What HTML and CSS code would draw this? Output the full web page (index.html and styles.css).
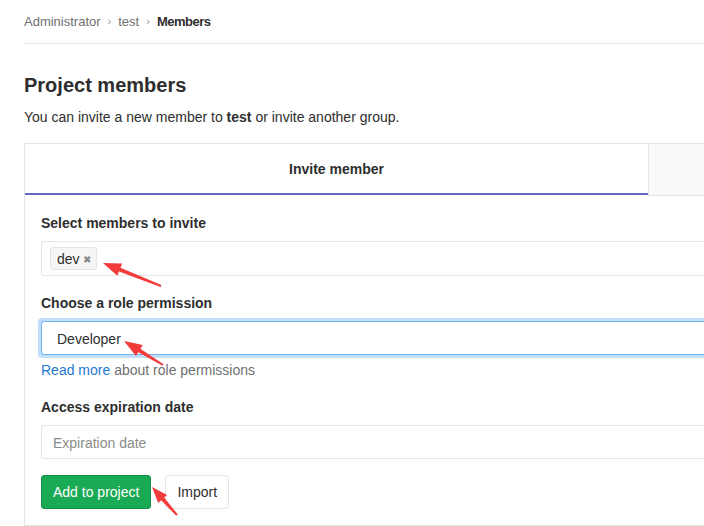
FILE: index.html
```html
<!DOCTYPE html>
<html>
<head>
<meta charset="utf-8">
<link rel="stylesheet" href="styles.css">
</head>
<body>
<div class="page">
  <nav class="breadcrumb">
    <span class="crumb">Administrator</span>
    <span class="sep">›</span>
    <span class="crumb">test</span>
    <span class="sep">›</span>
    <span class="crumb current">Members</span>
  </nav>
  <h3 class="title">Project members</h3>
  <p class="lead">You can invite a new member to <strong>test</strong> or invite another group.</p>
  <div class="card">
    <div class="tabs">
      <div class="tab active">Invite member</div>
      <div class="tab other"></div>
    </div>
    <div class="card-body">
      <div class="group">
        <label class="label">Select members to invite</label>
        <div class="input tokens"><span class="token">dev <span class="x">✖</span></span></div>
      </div>
      <div class="group group-role">
        <label class="label">Choose a role permission</label>
        <div class="input select">Developer</div>
        <div class="help"><span class="link">Read more</span> about role permissions</div>
      </div>
      <div class="group">
        <label class="label">Access expiration date</label>
        <div class="input placeholder">Expiration date</div>
      </div>
      <div class="actions">
        <span class="btn btn-green">Add to project</span>
        <span class="btn btn-default">Import</span>
      </div>
    </div>
  </div>
</div>
<svg class="arrows" width="704" height="526" viewBox="0 0 704 526">
  <polygon fill="#f23c3c" points="103,263 122.12,263.6 120.46,267.78 161.37,285.07 160.63,286.93 118.98,271.5 117.32,275.68"/>
  <polygon fill="#f23c3c" points="124,341 142.74,344.89 140.38,348.73 163.52,364.15 162.48,365.85 138.28,352.13 135.92,355.97"/>
  <polygon fill="#f23c3c" points="152,487 167.15,494.95 164.16,497.62 177.75,514.33 176.25,515.67 161.18,500.28 158.19,502.95"/>
</svg>
</body>
</html>
```

FILE: styles.css
```css
html, body {
  margin: 0;
  padding: 0;
  background: #fff;
  overflow: hidden;
  width: 704px;
  height: 526px;
}
body {
  font-family: "Liberation Sans", Arial, sans-serif;
  font-size: 14px;
  color: #2e2e2e;
  position: relative;
}
.page {
  padding-left: 24px;
  width: 680px;
}
.breadcrumb {
  height: 43px;
  line-height: 43px;
  border-bottom: 1px solid #e5e5e5;
  font-size: 13px;
  color: #707070;
  display: flex;
  gap: 7px;
}
.sep {
  font-size: 11px;
  color: #999;
}
.current {
  color: #2e2e2e;
  font-weight: 600;
  letter-spacing: -0.5px;
}
.title {
  margin: 29px 0 0;
  font-size: 20px;
  font-weight: 600;
  line-height: 24px;
}
.lead {
  margin: 10px 0 0;
  line-height: 20px;
}
.card {
  margin-top: 16px;
  border: 1px solid #e5e5e5;
  border-right: none;
}
.tabs {
  display: flex;
  align-items: flex-start;
}
.tab {
  box-sizing: border-box;
}
.tab.active {
  width: 623px;
  height: 51px;
  border-bottom: 2px solid #6666c4;
  text-align: center;
  line-height: 51px;
  font-weight: 600;
  color: #2e2e2e;
}
.tab.other {
  flex: 1;
  height: 52px;
  background: #fafafa;
  border-left: 1px solid #e5e5e5;
  border-bottom: 1px solid #e5e5e5;
}
.card-body {
  padding: 17px 0 16px 16px;
}
.group {
  margin-bottom: 17px;
}
.label {
  display: block;
  font-weight: 600;
  line-height: 20px;
  margin-bottom: 8px;
}
.input {
  box-sizing: border-box;
  height: 34px;
  border: 1px solid #e5e5e5;
  border-right: none;
  border-radius: 3px 0 0 3px;
  line-height: 34px;
  padding: 0 11px;
  overflow: hidden;
}
.tokens {
  height: 35px;
  padding: 5px 8px;
  line-height: 20px;
}
.token {
  display: inline-block;
  box-sizing: border-box;
  height: 23px;
  line-height: 22px;
  padding: 0 5px 0 6px;
  background: #f6f6f6;
  border: 1px solid #e3e3e3;
  border-radius: 3px;
  font-size: 14px;
}
.token .x {
  color: #888;
  font-size: 10px;
  vertical-align: 1px;
}
.select {
  border-color: #73b5f0;
  box-shadow: -3px 0 0 0 #c2e0fb, 0 -3px 0 0 #c2e0fb, 0 3px 0 0 #c2e0fb, -2px -2px 0 1px #c2e0fb, -2px 2px 0 1px #c2e0fb;
  padding-left: 15px;
  overflow: visible;
}
.help {
  margin-top: 5px;
  line-height: 20px;
  color: #707070;
}
.link {
  color: #1f78d1;
}
.placeholder {
  color: #8a8a8a;
}
.actions {
  display: flex;
  gap: 14px;
  margin-top: -1px;
}
.btn {
  box-sizing: border-box;
  height: 34px;
  line-height: 33px;
  padding: 0 11px;
  border-radius: 3px;
  border: 1px solid #e5e5e5;
  overflow: hidden;
}
.btn-green {
  background: #1aaa55;
  border-color: #168f48;
  color: #fff;
}
.btn-default {
  background: #fff;
  color: #2e2e2e;
}
.arrows {
  position: absolute;
  top: 0;
  left: 0;
  pointer-events: none;
}
```
